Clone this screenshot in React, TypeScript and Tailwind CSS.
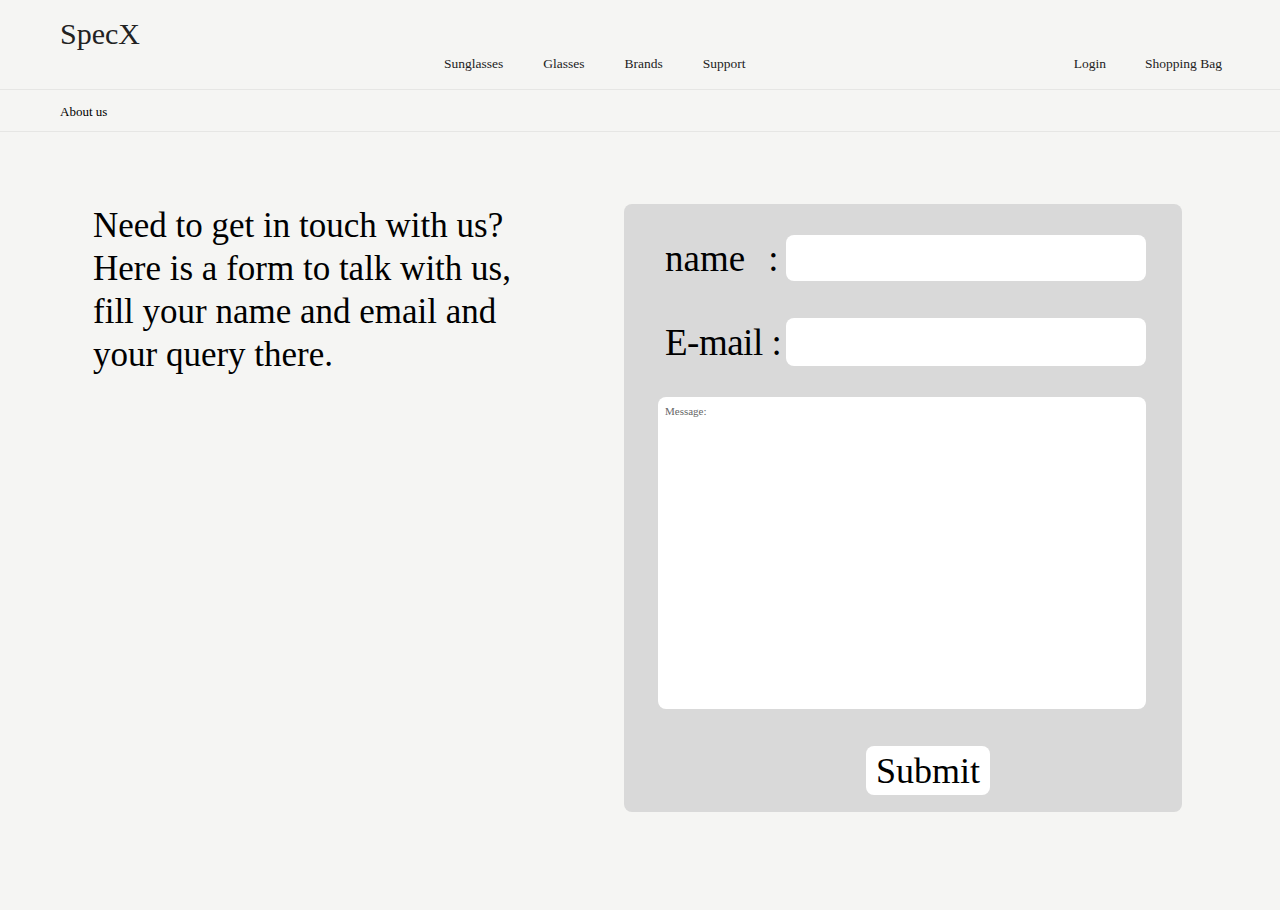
import { useState } from 'react';

const serif = "font-['Liberation_Serif','DejaVu_Serif',serif]";

const navLinks = ['Sunglasses', 'Glasses', 'Brands', 'Support'];

function Header() {
  return (
    <header className="border-b border-[#e6e6e4]">
      <div className="flex h-[89px] pl-[60px] pr-[58px]">
        <div className="pt-[19px] text-[30px] leading-none text-[#222]">SpecX</div>
        <nav className="ml-[304px] flex gap-[40px] pt-[54px] text-[13.5px] text-[#222]">
          {navLinks.map((l) => (
            <a key={l} href="#">
              {l}
            </a>
          ))}
        </nav>
        <div className="ml-auto flex gap-[39px] pt-[54px] text-[13.5px] text-[#222]">
          <a href="#">Login</a>
          <a href="#">Shopping Bag</a>
        </div>
      </div>
    </header>
  );
}

export default function App() {
  const [name, setName] = useState('');
  const [email, setEmail] = useState('');
  const [message, setMessage] = useState('');

  return (
    <div className={`min-h-[910px] bg-[#f5f5f3] ${serif}`}>
      <Header />
      <div className="flex h-[42px] items-center border-b border-[#e6e6e4] px-[60px] pt-[3px] text-[13px] text-black">
        <a href="#">About us</a>
      </div>

      <main className="flex px-[93px] pt-[72px]">
        <p className="w-[440px] shrink-0 text-[35px] leading-[43px] text-black">
          Need to get in touch with us? Here is a form to talk with us, fill your name and email and
          your query there.
        </p>

        <form
          className="ml-[91px] flex h-[608px] w-[558px] flex-col rounded-lg bg-[#d9d9d9] pl-[34px] pr-[36px] pt-[31px]"
          onSubmit={(e) => e.preventDefault()}
        >
          <div className="flex items-center">
            <label className="w-[128px] shrink-0 whitespace-nowrap pl-[7px] text-[37px] leading-none text-black">
              name<span className="ml-[23px]">:</span>
            </label>
            <input
              value={name}
              onChange={(e) => setName(e.target.value)}
              className="h-[46px] min-w-0 flex-1 rounded-lg bg-white px-2 outline-none"
            />
          </div>

          <div className="mt-[37px] flex items-center">
            <label className="w-[128px] shrink-0 whitespace-nowrap pl-[7px] text-[37px] leading-none tracking-[-0.5px] text-black">
              E-mail :
            </label>
            <input
              type="email"
              value={email}
              onChange={(e) => setEmail(e.target.value)}
              className="h-[48px] min-w-0 flex-1 rounded-lg bg-white px-2 outline-none"
            />
          </div>

          <textarea
            value={message}
            onChange={(e) => setMessage(e.target.value)}
            placeholder="Message:"
            className="mt-[31px] h-[312px] shrink-0 resize-none rounded-lg bg-white px-[7px] py-[6px] text-[11px] outline-none placeholder:text-[#666]"
          />

          <div className="mt-[37px] flex justify-center pl-[52px]">
            <button
              type="submit"
              className="h-[49px] rounded-lg bg-white px-[10px] text-[36px] leading-none text-black"
            >
              Submit
            </button>
          </div>
        </form>
      </main>
    </div>
  );
}
